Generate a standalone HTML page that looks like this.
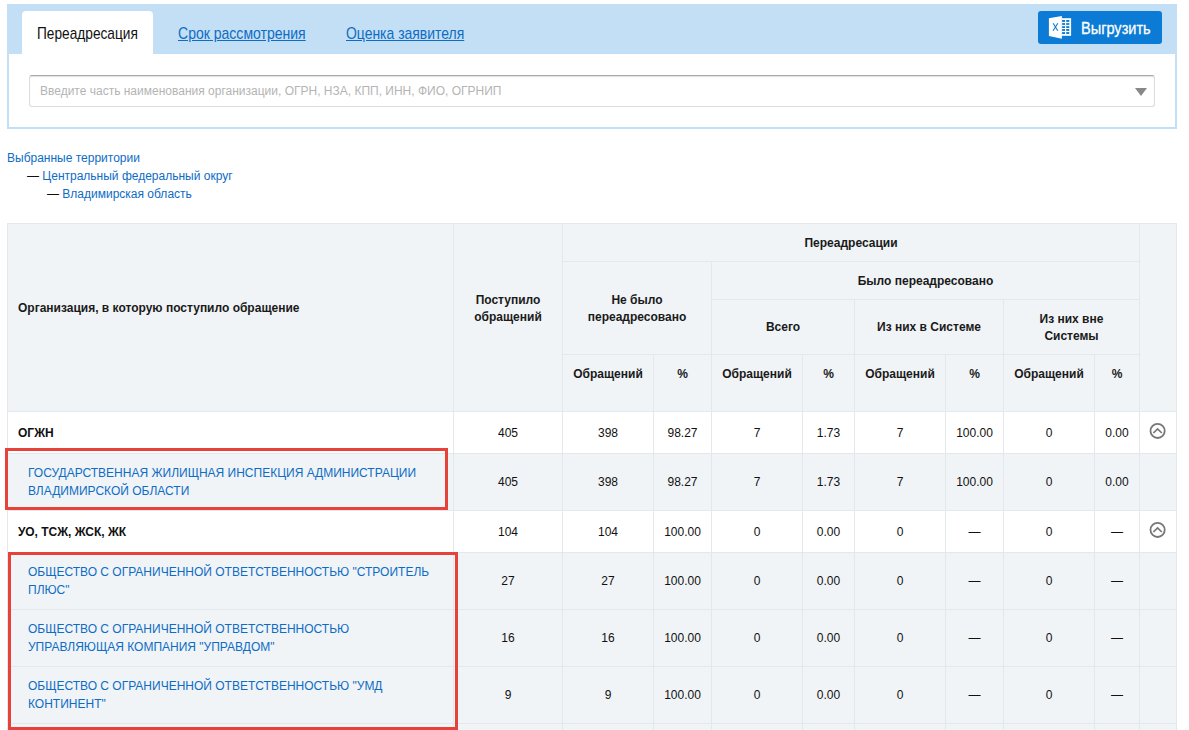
<!DOCTYPE html>
<html><head><meta charset="utf-8">
<style>
*{box-sizing:border-box;margin:0;padding:0}
html,body{width:1189px;height:730px;overflow:hidden;background:#fff;font-family:"Liberation Sans",sans-serif;font-size:12px;color:#222}
.abs{position:absolute}
#band{position:absolute;left:7px;top:4px;width:1170px;height:50px;background:#c2dff5}
#panel{position:absolute;left:7px;top:54px;width:1170px;height:75px;border:2px solid #c2dff5;border-top:0;background:#fff}
#tab1{position:absolute;left:22px;top:11px;width:131px;height:43px;background:#fff;border-radius:4px 4px 0 0}
.cond{position:absolute;white-space:nowrap;transform-origin:0 0;font-size:17px;line-height:20px}
#t1{left:37px;top:24px;color:#111;transform:scaleX(.805)}
#t2{left:178px;top:24px;color:#0e6cc4;text-decoration:underline;transform:scaleX(.825)}
#t3{left:346px;top:24px;color:#0e6cc4;text-decoration:underline;transform:scaleX(.82)}
#btn{position:absolute;left:1038px;top:11px;width:124px;height:33px;background:#0b7bd5;border-radius:3px}
#btntxt{left:1081px;top:19px;color:#fff;transform:scaleX(.855);-webkit-text-stroke:.3px #fff}
#inp{position:absolute;left:29px;top:75px;width:1126px;height:32px;border:1px solid #dcdcdc;border-top-color:#aaa;border-radius:3px;box-shadow:inset 0 1px 1px rgba(0,0,0,.12)}
#ph{position:absolute;left:40px;top:84px;color:#b4b4b4;white-space:nowrap}
#arr{position:absolute;left:1135px;top:88px;width:0;height:0;border-left:6px solid transparent;border-right:6px solid transparent;border-top:8px solid #888}
.terr{position:absolute;white-space:nowrap;color:#0e6cc4}
.terr b{font-weight:normal;color:#111}
table{position:absolute;left:7px;top:223px;border-collapse:collapse;table-layout:fixed}
td,th{border:1px solid #e3e8ec;padding:0;vertical-align:middle;text-align:center}
th{background:#f0f4f7;font-weight:bold;color:#1a1a1a;line-height:17px;padding-top:2px}
th.pb{padding-bottom:20px}
td{line-height:18px;color:#111}
tr.g td{background:#fff}
tr.o td{background:#f0f4f7}
td.n{text-align:left;padding-left:10px;font-weight:bold;color:#111}
td.l{text-align:left;padding-left:20px;color:#0e6cc4}
th.l{text-align:left;padding-left:10px}
.red{position:absolute;border:3px solid #e6423a}
.ic{display:inline-block;vertical-align:middle}
</style></head><body>
<div id="band"></div>
<div id="panel"></div>
<div id="tab1"></div>
<div class="cond" id="t1">Переадресация</div>
<div class="cond" id="t2">Срок рассмотрения</div>
<div class="cond" id="t3">Оценка заявителя</div>
<div id="btn"></div>
<svg class="abs" style="left:1048px;top:15px" width="24" height="24" viewBox="0 0 24 24">
<polygon points="0.9,3.2 13.9,1.1 13.9,23.7 0.9,21" fill="#fff"/>
<rect x="13.9" y="3.2" width="9.2" height="17.6" fill="#fff"/>
<g fill="#0b7bd5"><rect x="14.1" y="5" width="2.9" height="1.9"/><rect x="18.2" y="5" width="3.1" height="1.9"/>
<rect x="14.1" y="8.1" width="2.9" height="1.8"/><rect x="18.2" y="8.1" width="3.1" height="1.8"/>
<rect x="14.1" y="11.2" width="2.9" height="1.8"/><rect x="18.2" y="11.2" width="3.1" height="1.8"/>
<rect x="14.1" y="14" width="2.9" height="1.9"/><rect x="18.2" y="14" width="3.1" height="1.9"/>
<rect x="14.1" y="17.1" width="2.9" height="1.9"/><rect x="18.2" y="17.1" width="3.1" height="1.9"/></g>
<path d="M5.1 8.2 L9.8 15.7 M9.8 8.2 L5.1 15.7" stroke="#0b7bd5" stroke-width="1.1" fill="none"/>
</svg>
<div class="cond" id="btntxt">Выгрузить</div>
<div id="inp"></div>
<div id="ph">Введите часть наименования организации, ОГРН, НЗА, КПП, ИНН, ФИО, ОГРНИП</div>
<div id="arr"></div>

<div class="terr" style="left:7px;top:151px">Выбранные территории</div>
<div class="terr" style="left:27px;top:169px"><b>—</b> Центральный федеральный округ</div>
<div class="terr" style="left:47px;top:187px"><b>—</b> Владимирская область</div>

<table>
<colgroup>
<col style="width:446px"><col style="width:109px"><col style="width:91px"><col style="width:58px"><col style="width:91px"><col style="width:52px"><col style="width:91px"><col style="width:58px"><col style="width:91px"><col style="width:45px"><col style="width:37px">
</colgroup>
<tr style="height:38px"><th rowspan="4" class="l pb">Организация, в которую поступило обращение</th><th rowspan="4" class="pb">Поступило<br>обращений</th><th colspan="8">Переадресации</th><th rowspan="4"></th></tr>
<tr style="height:38px"><th colspan="2" rowspan="2">Не было<br>переадресовано</th><th colspan="6">Было переадресовано</th></tr>
<tr style="height:55px"><th colspan="2" style="padding-top:0">Всего</th><th colspan="2" style="padding-top:0">Из них в Системе</th><th colspan="2">Из них вне<br>Системы</th></tr>
<tr style="height:57px"><th class="pb">Обращений</th><th class="pb">%</th><th class="pb">Обращений</th><th class="pb">%</th><th class="pb">Обращений</th><th class="pb">%</th><th class="pb">Обращений</th><th class="pb">%</th></tr>
<tr class="g" style="height:42px"><td class="n">ОГЖН</td><td>405</td><td>398</td><td>98.27</td><td>7</td><td>1.73</td><td>7</td><td>100.00</td><td>0</td><td>0.00</td><td></td></tr>
<tr class="o" style="height:57px"><td class="l">ГОСУДАРСТВЕННАЯ ЖИЛИЩНАЯ ИНСПЕКЦИЯ АДМИНИСТРАЦИИ<br>ВЛАДИМИРСКОЙ ОБЛАСТИ</td><td>405</td><td>398</td><td>98.27</td><td>7</td><td>1.73</td><td>7</td><td>100.00</td><td>0</td><td>0.00</td><td></td></tr>
<tr class="g" style="height:42px"><td class="n">УО, ТСЖ, ЖСК, ЖК</td><td>104</td><td>104</td><td>100.00</td><td>0</td><td>0.00</td><td>0</td><td>—</td><td>0</td><td>—</td><td></td></tr>
<tr class="o" style="height:57px"><td class="l">ОБЩЕСТВО С ОГРАНИЧЕННОЙ ОТВЕТСТВЕННОСТЬЮ "СТРОИТЕЛЬ<br>ПЛЮС"</td><td>27</td><td>27</td><td>100.00</td><td>0</td><td>0.00</td><td>0</td><td>—</td><td>0</td><td>—</td><td></td></tr>
<tr class="o" style="height:57px"><td class="l">ОБЩЕСТВО С ОГРАНИЧЕННОЙ ОТВЕТСТВЕННОСТЬЮ<br>УПРАВЛЯЮЩАЯ КОМПАНИЯ "УПРАВДОМ"</td><td>16</td><td>16</td><td>100.00</td><td>0</td><td>0.00</td><td>0</td><td>—</td><td>0</td><td>—</td><td></td></tr>
<tr class="o" style="height:57px"><td class="l">ОБЩЕСТВО С ОГРАНИЧЕННОЙ ОТВЕТСТВЕННОСТЬЮ "УМД<br>КОНТИНЕНТ"</td><td>9</td><td>9</td><td>100.00</td><td>0</td><td>0.00</td><td>0</td><td>—</td><td>0</td><td>—</td><td></td></tr>
<tr class="o" style="height:57px"><td class="l">&nbsp;</td><td></td><td></td><td></td><td></td><td></td><td></td><td></td><td></td><td></td><td></td></tr>
</table>

<div class="red" style="left:5px;top:448px;width:443px;height:62px"></div>
<div class="red" style="left:8px;top:552px;width:450px;height:178px"></div>
<svg class="abs" style="left:1149px;top:422px" width="18" height="18" viewBox="0 0 18 18"><circle cx="8.6" cy="8.9" r="7.1" stroke="#777" stroke-width="1.8" fill="none"/><path d="M4.4 11 L8.6 6.9 L12.8 11" stroke="#777" stroke-width="1.7" fill="none"/></svg>
<svg class="abs" style="left:1149px;top:521px" width="18" height="18" viewBox="0 0 18 18"><circle cx="8.6" cy="8.9" r="7.1" stroke="#777" stroke-width="1.8" fill="none"/><path d="M4.4 11 L8.6 6.9 L12.8 11" stroke="#777" stroke-width="1.7" fill="none"/></svg>
</body></html>
